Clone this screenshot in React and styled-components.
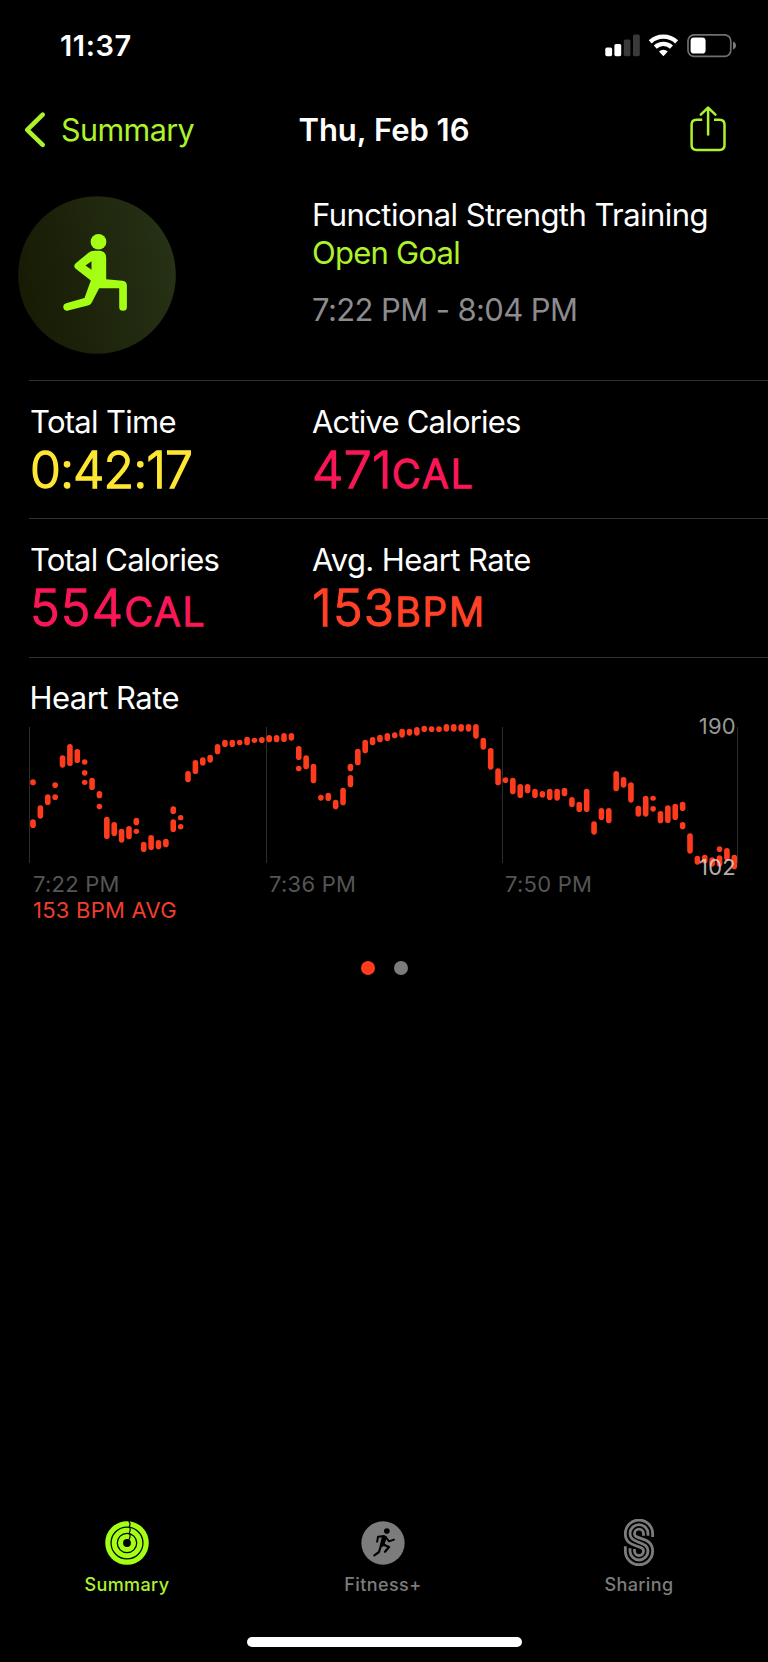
import React from "react";
import styled, { createGlobalStyle } from "styled-components";

const GlobalStyle = createGlobalStyle`
  * { box-sizing: border-box; }
  html, body { margin: 0; padding: 0; background: #000; }
  body { font-family: Inter, "Liberation Sans", sans-serif; -webkit-font-smoothing: antialiased; }
  svg { display: block; flex: none; }
`;

const lime = "#a4ff14";
const limeText = "#aef22c";
const red = "#ff3b1d";

const Screen = styled.div`
  width: 768px;
  height: 1662px;
  background: #000;
  color: #fff;
  display: flex;
  flex-direction: column;
  overflow: hidden;
`;

const Text = styled.span`
  display: block;
  white-space: nowrap;
  font-size: ${(p) => p.$size || 31}px;
  line-height: ${(p) => p.$line || 38}px;
  font-weight: ${(p) => p.$weight || 400};
  letter-spacing: ${(p) => p.$track || 0}px;
  color: ${(p) => p.$color || "#fff"};
`;

const AxisText = styled(Text)`
  font-size: 22px;
  line-height: 26px;
  letter-spacing: 0.25px;
`;

const TabText = styled(Text)`
  font-size: 18px;
  line-height: 24px;
  font-weight: 500;
  letter-spacing: 0.4px;
`;

const StatusBar = styled.header`
  height: 92px;
  padding: 0 32px 0 60px;
  display: flex;
  justify-content: space-between;
  align-items: center;
`;

const StatusIcons = styled.div`
  display: flex;
  gap: 8px;
`;

const NavBar = styled.nav`
  height: 76px;
  padding: 0 25px;
  display: grid;
  grid-template-columns: 1fr auto 1fr;
  align-items: center;
`;

const BackLink = styled.div`
  display: flex;
  align-items: center;
  gap: 14px;
`;

const ShareButton = styled.div`
  justify-self: end;
  margin: 0 17px 2px 0;
`;

const Hero = styled.section`
  height: 212px;
  padding: 28px 0 0 18px;
  display: grid;
  grid-template-columns: 294px 1fr;
`;

const HeroText = styled.div`
  display: flex;
  flex-direction: column;
`;

const TimeRange = styled(Text)`
  margin-top: 19px;
`;

const Divided = styled.section`
  margin-left: 29px;
  border-top: 1px solid #303030;
`;

const MetricRow = styled(Divided)`
  height: ${(p) => p.$height}px;
  padding: 22px 0 0 1px;
  display: grid;
  grid-template-columns: 282px 1fr;
`;

const MetricValue = styled.div`
  display: flex;
  align-items: baseline;
  height: 58px;
  color: ${(p) => p.$color};
  font-weight: 300;
  line-height: 58px;
  white-space: nowrap;
  -webkit-text-stroke: 1.3px ${(p) => p.$color};
  stroke-linejoin: round;
`;

const Digits = styled.span`
  font-size: 50px;
  letter-spacing: ${(p) => p.$track || 0}px;
`;

const Unit = styled.span`
  font-size: 39px;
  -webkit-text-stroke-width: 1.7px;
  letter-spacing: ${(p) => p.$track || 0}px;
`;

const ChartSection = styled(Divided)`
  padding-top: 21px;
`;

const ChartTitle = styled(Text)`
  margin-left: 0.5px;
`;

const ChartFrame = styled.div`
  position: relative;
  margin-top: 10px;
  width: 710px;
  height: 136px;
`;

const Bound = styled(AxisText)`
  position: absolute;
  right: 3px;
  top: ${(p) => p.$top}px;
  opacity: 0.8;
`;

const TimeAxis = styled.div`
  display: grid;
  grid-template-columns: repeat(3, 236px);
  padding: 8px 0 0 4px;
`;

const Average = styled(AxisText)`
  margin-left: 4px;
`;

const Pager = styled.div`
  display: flex;
  justify-content: center;
  gap: 19px;
  margin-top: 38px;
`;

const PageDot = styled.i`
  width: 14px;
  height: 14px;
  border-radius: 50%;
  background: ${(p) => (p.$active ? red : "#7b7b7b")};
`;

const TabBar = styled.footer`
  margin-top: auto;
  height: 118px;
  display: grid;
  grid-template-columns: repeat(3, 256px);
  margin-left: -1px;
`;

const Tab = styled.div`
  display: flex;
  flex-direction: column;
  align-items: center;
  gap: 6px;
`;

const HomeIndicator = styled.div`
  width: 275px;
  height: 10px;
  border-radius: 5px;
  background: #fff;
  margin: 0 auto 15px;
`;

/* One entry per column; each pair is the top and bottom of a mark. */
const samples = [
  [[157, 175], [277, 303]], [[235, 275]], [[202, 234]], [[166, 183], [202, 219]],
  [[85, 122]], [[51, 117]], [[66, 108]], [[97, 113], [129, 146], [158, 174]],
  [[152, 189]], [[192, 214], [230, 247]], [[269, 336]], [[285, 327]], [[305, 347]],
  [[297, 337]], [[272, 295], [305, 321]], [[344, 375]], [[324, 369]], [[339, 367]],
  [[335, 361]], [[238, 261], [277, 315]], [[264, 280], [291, 307]], [[132, 166]],
  [[99, 141]], [[91, 116]], [[83, 107]], [[51, 82]], [[38, 60]], [[38, 60]],
  [[38, 55]], [[29, 55]], [[32, 48]], [[30, 48]], [[24, 46]], [[24, 46]],
  [[18, 45]], [[18, 41]], [[57, 99], [116, 133]], [[85, 127]], [[110, 169]],
  [[203, 221]], [[197, 222]], [[218, 247]], [[182, 235]], [[110, 133], [144, 181]],
  [[65, 115]], [[38, 79]], [[30, 55]], [[23, 46]], [[18, 42]], [[16, 34]],
  [[5, 32]], [[5, 26]], [[0, 26]], [[-4, 15]], [[-2, 15]], [[-2, 15]],
  [[-9, 14]], [[-9, 14]], [[-9, 14]], [[-9, 14]], [[-9, 35]], [[32, 68]],
  [[63, 128]], [[124, 175]], [[151, 168]], [[152, 202]], [[171, 213]], [[171, 199]],
  [[185, 213]], [[192, 212]], [[185, 219]], [[185, 221]], [[182, 208]], [[210, 240]],
  [[224, 255]], [[185, 255]], [[283, 323]], [[243, 279]], [[243, 289]], [[132, 193]],
  [[150, 182]], [[166, 227]], [[236, 269]], [[206, 269]], [[206, 221], [237, 254]],
  [[252, 289]], [[235, 288]], [[230, 279]], [[224, 252], [285, 307]], [[319, 380]],
  [[386, 413]], [[383, 409]], [[391, 419]], [[358, 375], [385, 419]], [[363, 401]],
  [[383, 427]],
];

function HeartRateChart() {
  return (
    <svg width="710" height="136" viewBox="0 0 710 136" overflow="visible">
      {[0.5, 237.5, 473.5, 708.5].map((x) => (
        <rect key={x} x={x - 0.5} y="0" width="1" height="136" fill="#2c2c2c" />
      ))}
      {samples.map((marks, i) =>
        marks.map(([top, bottom]) => (
          <rect
            key={`${i}-${top}`}
            x={4 + i * 7.382 - 2.8}
            y={top / 3}
            width="5.6"
            height={(bottom - top) / 3}
            rx="2.8"
            fill={red}
          />
        ))
      )}
    </svg>
  );
}

function SignalIcon() {
  return (
    <svg width="35" height="24" viewBox="605 34 35 24">
      <rect x="605.3" y="47.6" width="6.8" height="8.6" rx="1.6" fill="#fff" />
      <rect x="614.4" y="44" width="6.8" height="12.2" rx="1.6" fill="#fff" />
      <rect x="623.8" y="39.6" width="6.6" height="16.6" rx="1.6" fill="#3a3a3a" />
      <rect x="633" y="34.6" width="6.8" height="21.6" rx="1.6" fill="#3a3a3a" />
    </svg>
  );
}

function WifiIcon() {
  return (
    <svg width="31" height="24" viewBox="648 34 31 24">
      <g fill="none" stroke="#fff" strokeWidth="4.3">
        <path d="M650.2 41.9a19.4 19.4 0 0 1 26.4 0" />
        <path d="M655.3 47.1a12 12 0 0 1 16.2 0" />
      </g>
      <path d="M663.4 56.2l-4.4-4.6a6.4 6.4 0 0 1 8.8 0z" fill="#fff" />
    </svg>
  );
}

function BatteryIcon() {
  return (
    <svg width="49" height="24" viewBox="687 34 49 24">
      <rect x="688" y="34.8" width="42.8" height="21.6" rx="6.2" fill="none" stroke="#6f6f6f" strokeWidth="1.7" />
      <rect x="690.6" y="37.4" width="15" height="16.2" rx="3.4" fill="#fff" />
      <path d="M733 41.6q3 1.2 3 4t-3 4z" fill="#7a7a7a" />
    </svg>
  );
}

function ChevronIcon() {
  return (
    <svg width="22" height="36" viewBox="25 112 22 36" overflow="visible">
      <path d="M42.7 114.6L27.2 129.8L42.7 144.9" fill="none" stroke={limeText} strokeWidth="4.6" strokeLinecap="round" strokeLinejoin="round" />
    </svg>
  );
}

function ShareIcon() {
  return (
    <svg width="36" height="46" viewBox="690 106 36 46">
      <g fill="none" stroke={limeText} strokeWidth="2.5" strokeLinecap="round" strokeLinejoin="round">
        <path strokeLinecap="butt" d="M702.2 119.8H696.5q-4.9 0-4.9 4.9V145q0 4.9 4.9 4.9H719.6q4.9 0 4.9-4.9V124.7q0-4.9-4.9-4.9H714" />
        <path d="M708.1 134.4V108M700.8 114.6L708.1 107.6L715.4 114.6" />
      </g>
    </svg>
  );
}

function WorkoutIcon() {
  return (
    <svg width="158" height="158" viewBox="55 48 473 473">
      <defs>
        <linearGradient id="badge" x1="0" y1="0.6" x2="1" y2="0.4">
          <stop offset="0" stopColor="#171b04" />
          <stop offset="1" stopColor="#263115" />
        </linearGradient>
      </defs>
      <circle cx="291.5" cy="284.5" r="236" fill="url(#badge)" />
      <circle cx="296" cy="185" r="23.5" fill={lime} />
      <path
        fill={lime}
        fillRule="evenodd"
        d="M284 212H299Q319 213 319 234V297L368 302Q381 304 381 316V380A11.500 11.500 0 0 1 358 380V324H298L275 368Q271 375 264 376L205 391A11 11 0 0 1 199 369L254 353L273 301L227 265Q220 257 227 250L266 218Q273 212 284 212ZM257 256L275 269V243Z"
      />
    </svg>
  );
}

function RingsIcon() {
  return (
    <svg width="44" height="48" viewBox="135 56 132 144">
      <g fill="none" stroke={lime}>
        <circle cx="201" cy="128" r="57.500" strokeWidth="15.500" />
        <circle cx="201" cy="128" r="38.500" strokeWidth="15" />
        <circle cx="201" cy="128" r="19.500" strokeWidth="15.500" />
      </g>
      <path d="M206 62Q213 70 208 78Q213 88 208 97Q213 107 207 118" fill="none" stroke="#000" strokeWidth="3.600" />
    </svg>
  );
}

function RunnerIcon() {
  return (
    <svg width="44" height="48" viewBox="122 56 132 144">
      <circle cx="188" cy="128" r="65" fill="#7c7c7c" />
      <circle cx="199.500" cy="92" r="8.500" fill="#000" />
      <g fill="none" stroke="#000" strokeWidth="6" strokeLinecap="round" strokeLinejoin="round">
        <path d="M170.500 124L173 109.500L191 107.500" />
        <path d="M196 110L206 123L221 118" />
        <path d="M188 132L206 140L194 154" strokeWidth="7" />
        <path d="M183 132L176 155L162 165" strokeWidth="6.500" />
      </g>
      <path d="M184 105Q196 103 200 110L192 134L186 141L178 136L184 112Z" fill="#000" />
    </svg>
  );
}

function SharingIcon() {
  return (
    <svg width="32" height="48" viewBox="188.500 57 96 144">
      <g fill="none" stroke="#7c7c7c" strokeWidth="8.400">
        <path d="M277.500 111V101A41 41 0 0 0 195.500 101C195.500 126 212 132 229 138S250 145 250 153A13.500 13.500 0 0 1 223 153V147" />
        <path d="M263.500 107V101A27 27 0 0 0 209.500 101C209.500 117 222 121 236.500 127S263.500 137 263.500 153A27 27 0 0 1 209.500 153V145" />
        <path d="M250 107V101A13.500 13.500 0 0 0 223 101C223 109 228 111 244 116S277.500 128 277.500 153A41 41 0 0 1 195.500 153V139" />
      </g>
    </svg>
  );
}

function Metric({ label, labelTrack = -0.7, digits, unit, color, track, unitTrack }) {
  return (
    <div>
      <Text $track={labelTrack}>{label}</Text>
      <MetricValue $color={color}>
        <Digits $track={track}>{digits}</Digits>
        {unit && <Unit $track={unitTrack}>{unit}</Unit>}
      </MetricValue>
    </div>
  );
}

export default function App() {
  return (
    <Screen>
      <GlobalStyle />
      <StatusBar>
        <Text $size={29} $weight={600} $track={0.6}>11:37</Text>
        <StatusIcons>
          <SignalIcon />
          <WifiIcon />
          <BatteryIcon />
        </StatusIcons>
      </StatusBar>
      <NavBar>
        <BackLink>
          <ChevronIcon />
          <Text $size={30.5} $track={-0.6} $color={limeText}>Summary</Text>
        </BackLink>
        <Text $weight={600}>Thu, Feb 16</Text>
        <ShareButton><ShareIcon /></ShareButton>
      </NavBar>
      <Hero>
        <WorkoutIcon />
        <HeroText>
          <Text $track={-0.56}>Functional Strength Training</Text>
          <Text $track={-0.75} $color={limeText}>Open Goal</Text>
          <TimeRange $track={-0.6} $color="#8c8c8f">7:22 PM - 8:04 PM</TimeRange>
        </HeroText>
      </Hero>
      <MetricRow $height={138}>
        <Metric label="Total Time" digits="0:42:17" track={-1} color="#fde733" />
        <Metric label="Active Calories" labelTrack={-0.8} digits="471" track={0.3} unit="CAL" unitTrack={2.4} color="#f91757" />
      </MetricRow>
      <MetricRow $height={139}>
        <Metric label="Total Calories" labelTrack={-0.8} digits="554" track={1.2} unit="CAL" unitTrack={2} color="#f91757" />
        <Metric label="Avg. Heart Rate" labelTrack={-0.6} digits="153" track={1.2} unit="BPM" unitTrack={2} color="#ff4127" />
      </MetricRow>
      <ChartSection>
        <ChartTitle $track={-0.55}>Heart Rate</ChartTitle>
        <ChartFrame>
          <HeartRateChart />
          <Bound $top={-14} $color="#bdbdbd">190</Bound>
          <Bound $top={127} $color="#e0d8d6">102</Bound>
        </ChartFrame>
        <TimeAxis>
          <AxisText $color="#555">7:22 PM</AxisText>
          <AxisText $color="#555">7:36 PM</AxisText>
          <AxisText $color="#555">7:50 PM</AxisText>
        </TimeAxis>
        <Average $color="#f03e2c">153 BPM AVG</Average>
      </ChartSection>
      <Pager>
        <PageDot $active />
        <PageDot />
      </Pager>
      <TabBar>
        <Tab>
          <RingsIcon />
          <TabText $color={limeText}>Summary</TabText>
        </Tab>
        <Tab>
          <RunnerIcon />
          <TabText $color="#7c7c7c">Fitness+</TabText>
        </Tab>
        <Tab>
          <SharingIcon />
          <TabText $color="#7c7c7c">Sharing</TabText>
        </Tab>
      </TabBar>
      <HomeIndicator />
    </Screen>
  );
}
